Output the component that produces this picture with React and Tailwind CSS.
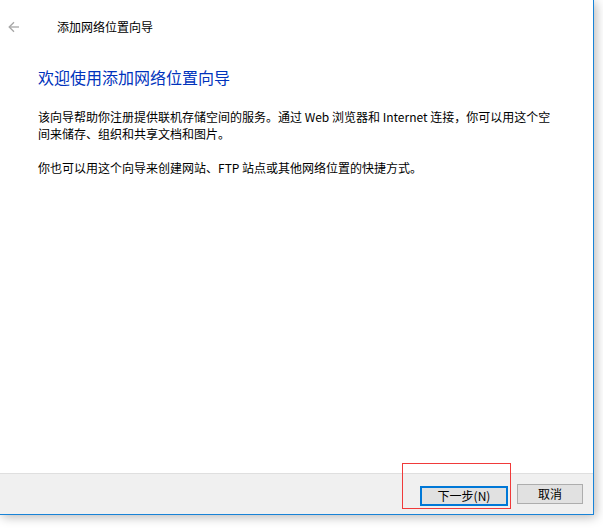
const font = { fontFamily: '"Noto Sans CJK SC", "Liberation Sans", sans-serif' };

const BackArrow = () => (
  <svg width="12" height="12" viewBox="0 0 12 12" fill="none" stroke="#a6a6a6" strokeWidth="1.3">
    <path d="M11 6H1.5" />
    <path d="M6 1.2L1.2 6L6 10.8" />
  </svg>
);

export default function App() {
  return (
    <div className="w-[603px] h-[528px] bg-white overflow-hidden" style={font}>
      <div className="w-[594px] h-[515px] flex flex-col bg-white border-r border-b border-[#1883d7] shadow-[2px_2px_10px_rgba(0,0,0,0.28)]">
        {/* title bar */}
        <div className="flex items-center h-[54px] pl-[8px]">
          <BackArrow />
          <span className="ml-[37px] text-[12px] text-black">添加网络位置向导</span>
        </div>

        {/* content */}
        <div className="flex-1 pl-[38px] pr-[20px]">
          <h1 className="text-[16px] leading-[22px] text-[#0033bc] mt-[12px]">欢迎使用添加网络位置向导</h1>
          <p className="text-[12px] leading-[17px] text-black mt-[20px]">
            该向导帮助你注册提供联机存储空间的服务。通过 Web 浏览器和 Internet 连接，你可以用这个空
            <br />
            间来储存、组织和共享文档和图片。
          </p>
          <p className="text-[12px] leading-[17px] text-black mt-[17px]">
            你也可以用这个向导来创建网站、FTP 站点或其他网络位置的快捷方式。
          </p>
        </div>

        {/* footer */}
        <div className="h-[41px] border-t border-[#dfdfdf] bg-[#f0f0f0] flex items-center justify-end pr-[10px] gap-[9px]">
          <div className="relative">
            <button className="w-[88px] h-[20px] border-2 border-[#0078d7] bg-[#e1e1e1] text-[12px] text-black leading-none">
              下一步(N)
            </button>
            <div className="absolute left-[-18px] top-[-19px] w-[109px] h-[46px] border border-[#f03a3a] pointer-events-none" />
          </div>
          <button className="w-[66px] h-[20px] border border-[#adadad] bg-[#e1e1e1] text-[12px] text-black leading-none">
            取消
          </button>
        </div>
      </div>
    </div>
  );
}
